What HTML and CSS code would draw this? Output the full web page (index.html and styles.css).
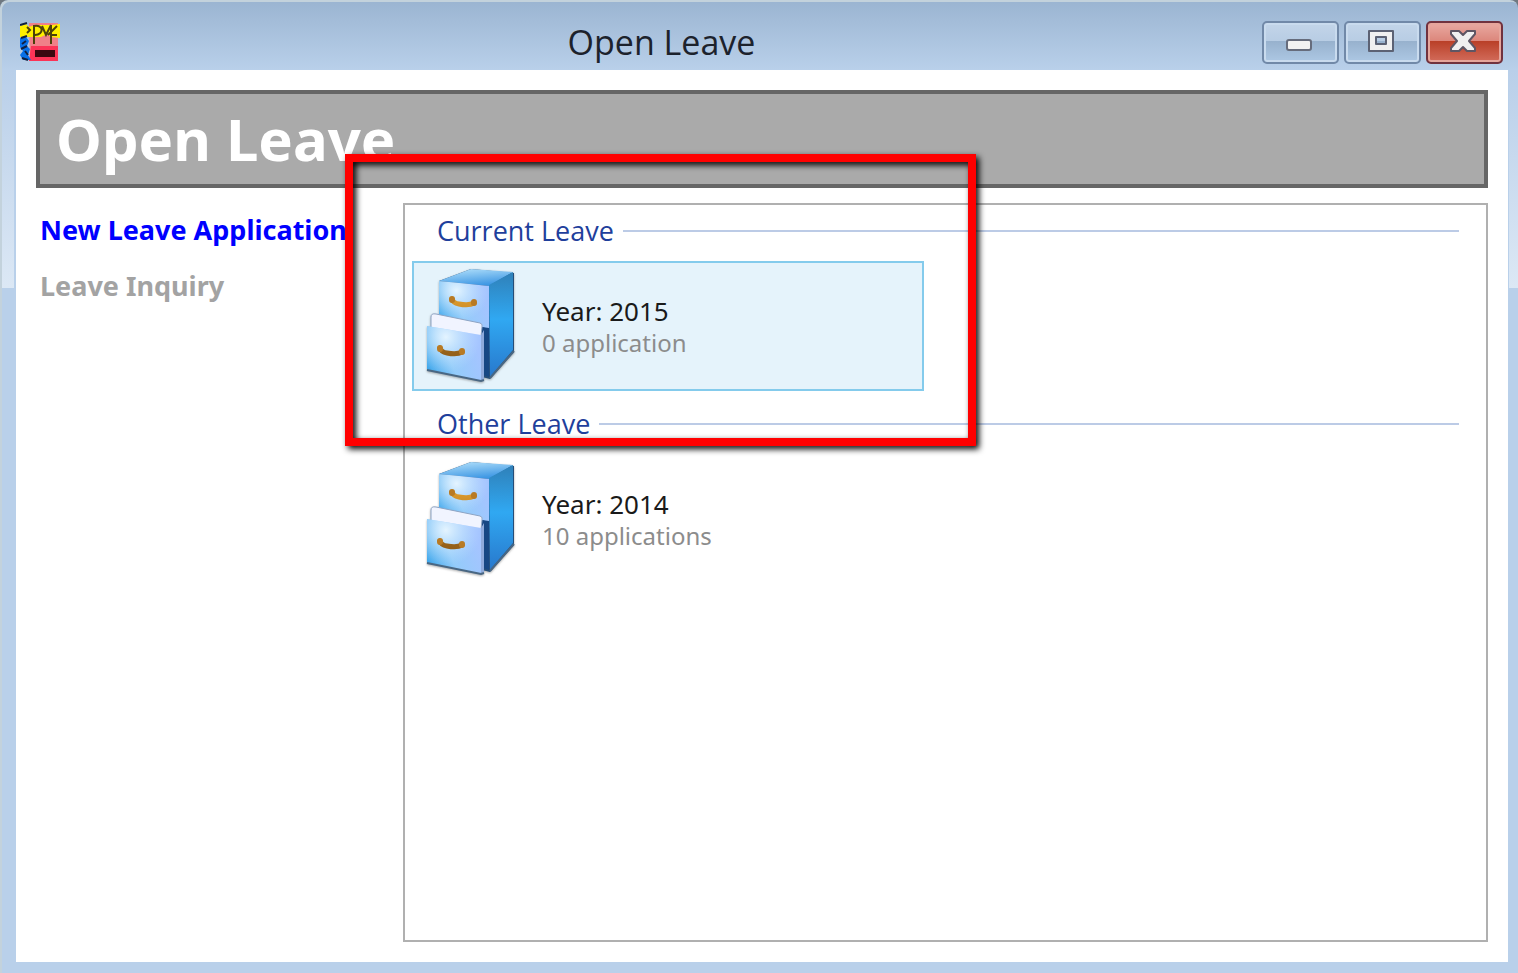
FILE: index.html
```html
<!DOCTYPE html>
<html lang="en">
<head>
<meta charset="utf-8">
<title>Open Leave</title>
<link rel="stylesheet" href="styles.css">
</head>
<body>
<div class="window">
  <header class="titlebar">
    <svg class="app-icon" viewBox="0 0 40 40" aria-hidden="true">
      <path d="M9 1h29v38H10z" fill="#f08088"/>
      <path d="M11 24h27v15H9z" fill="#fb3457"/>
      <path d="M15 28h20v7H15z" fill="#3a0810"/>
      <path d="M0 4l6-2 3 3 6-2h17l8-1v14l-9-1-4-3-6 3H0z" fill="#fff000"/>
      <path d="M0 16l6-1 3 4-2 5 3 3-2 6 3 5H3l-3-5 3-4-3-4z" fill="#0870e8"/>
      <path d="M0 3l7-2M1 16l6-2M1 27l6-3M2 36l6 2M6 19l-4 3M5 29l3 4" stroke="#102040" stroke-width="2" fill="none"/>
      <path d="M14 3v19M14 4c10-2 10 9 1 9M7 5l3 3-3 3M22 4l4 9 5-10M31 3v19M28 13l9-9M30 13h7" stroke="#4c420a" stroke-width="2" fill="none"/>
    </svg>
    <div class="window-title">Open Leave</div>
    <div class="controls">
      <button class="control" type="button" aria-label="Minimize">
        <svg viewBox="0 0 28 24"><rect x="2" y="11" width="24" height="10" rx="2" fill="#f2f2f2" stroke="#666c7c" stroke-width="2"/></svg>
      </button>
      <button class="control" type="button" aria-label="Maximize">
        <svg viewBox="0 0 28 24"><path d="M2 2h24v20H2zM9 8v7h10V8z" fill="#f0f0f0" fill-rule="evenodd" stroke="#5c6274" stroke-width="2" stroke-linejoin="round"/></svg>
      </button>
      <button class="control close" type="button" aria-label="Close">
        <svg viewBox="0 0 28 24"><path d="M2 2h8l4 4 4-4h8v3l-6 7 6 7v3h-8l-4-4-4 4H2v-3l6-7-6-7z" fill="#f0f0f0" stroke="#5e5664" stroke-width="2" stroke-linejoin="round"/></svg>
      </button>
    </div>
  </header>
  <main class="client">
    <h1 class="banner">Open Leave</h1>
    <div class="columns">
      <nav class="tasks">
        <a class="task" href="#new">New Leave Application</a>
        <a class="task disabled" aria-disabled="true">Leave Inquiry</a>
      </nav>
      <section class="list">
        <h2 class="group">Current Leave</h2>
        <button class="item selected" type="button">
          <svg class="cabinet" viewBox="0 0 94 118" aria-hidden="true">
            <defs>
              <linearGradient id="front" x1="0" y1="1" x2="1" y2="0.6">
                <stop offset="0" stop-color="#2c9fe8"/><stop offset=".5" stop-color="#94ccfa"/><stop offset="1" stop-color="#a4c4ff"/>
              </linearGradient>
              <radialGradient id="shine" cx=".35" cy=".2" r=".65">
                <stop offset="0" stop-color="#e4f4ff"/><stop offset="1" stop-color="#bfe2ff" stop-opacity="0"/>
              </radialGradient>
              <linearGradient id="side" x1="0" y1="0" x2="0" y2="1">
                <stop offset="0" stop-color="#2f80b8"/><stop offset=".45" stop-color="#30a8f2"/><stop offset="1" stop-color="#2878cc"/>
              </linearGradient>
              <linearGradient id="top" x1="0" y1="0" x2=".4" y2="1">
                <stop offset="0" stop-color="#b8e4fc"/><stop offset="1" stop-color="#3f98e4"/>
              </linearGradient>
              <linearGradient id="brass" x1="0" y1="0" x2="0" y2="1">
                <stop offset="0" stop-color="#dc9a2c"/><stop offset="1" stop-color="#94601a"/>
              </linearGradient>
            </defs>
            <g id="drawers">
              <path d="M15 14L47 2l43 4v79L66 112l-12-3z" fill="#254d78"/>
              <path d="M15 14L47 2l42 3-24 14z" fill="url(#top)"/>
              <path d="M65 18L89 5v78L66 110z" fill="url(#side)"/>
              <path d="M15 14l50 5v43l-50-13z" fill="url(#front)"/>
              <path d="M15 14l50 5v43l-50-13z" fill="url(#shine)"/>
              <path d="M58 60l7 1v49l-8-3z" fill="#174783"/>
              <path d="M7 50q0-4 5-3l44 9q3 1 2 4l-1 10L7 62z" fill="#f1f4ff" stroke="#8ea4c4"/>
              <path d="M3 59l54 9v46L3 103z" fill="url(#front)"/>
              <path d="M3 59l54 9v46L3 103z" fill="url(#shine)"/>
              <path d="M57 68l3-5v50l-3 1z" fill="#8faadb"/>
              <path d="M3 103l54 11 3-1M66 111l24-27" fill="none" stroke="#496783" stroke-width="2"/>
              <path d="M28 32q1 4 7 5 10 2 15-1M16 81q1 4 7 5 10 2 15-1" fill="none" stroke="url(#brass)" stroke-width="5" stroke-linecap="round"/>
              <path d="M28 32v1M50 35v1M16 81v1M38 84v1" stroke="#b87a24" stroke-width="6" stroke-linecap="round"/>
            </g>
          </svg>
          <span class="text"><span class="name">Year: 2015</span><span class="count">0 application</span></span>
        </button>
        <h2 class="group">Other Leave</h2>
        <button class="item" type="button">
          <svg class="cabinet" viewBox="0 0 94 118" aria-hidden="true"><use href="#drawers"/></svg>
          <span class="text"><span class="name">Year: 2014</span><span class="count">10 applications</span></span>
        </button>
      </section>
    </div>
  </main>
  <div class="highlight"></div>
</div>
</body>
</html>
```
FILE: styles.css
```css
* { box-sizing: border-box; }

body {
  margin: 0;
  background: #6f7880;
  font-family: "Noto Sans", "Open Sans", sans-serif;
}

button {
  font: inherit;
  margin: 0;
}

.window {
  position: relative;
  display: flex;
  flex-direction: column;
  min-height: 100vh;
  padding: 0 10px 11px 16px;
  border-radius: 8px 8px 0 0;
  background:
    linear-gradient(#b9cfe9, #dce8f5) 0 70px / 14px 218px no-repeat,
    linear-gradient(#b9cfe9, #dce8f5) 100% 70px / 9px 218px no-repeat,
    linear-gradient(#9ab4d1, #b9d0ea 70px);
  box-shadow: inset 2px 2px 0 #c3d2dc;
}

.titlebar {
  display: grid;
  grid-template-columns: 1fr auto 1fr;
  align-items: center;
  height: 70px;
  padding: 14px 5px 0 4px;
}

.app-icon {
  width: 40px;
  height: 40px;
}

.window-title {
  padding-right: 200px;
  font-size: 34px;
  line-height: 48px;
  color: #1c222c;
  font-family: "Open Sans", sans-serif;
}

.controls {
  display: flex;
  justify-content: flex-end;
  gap: 5px;
}

.control {
  display: flex;
  align-items: center;
  justify-content: center;
  width: 77px;
  height: 43px;
  padding: 0 3px 3px 0;
  border: 2px solid #7189a8;
  border-radius: 5px;
  background: linear-gradient(#c3d5e9, #b8cde4 45%, #97b1cd 46%, #adc8e4);
  box-shadow: inset 0 0 0 2px #c9dbee;
}

.control svg {
  width: 28px;
  height: 24px;
}

.control.close {
  border-color: #71323e;
  background: linear-gradient(#e9aaa2, #dc877c 45%, #b93f27 46%, #d36d5c);
  box-shadow: inset 0 0 0 2px #e6a69c;
}

.client {
  flex: 1;
  display: flex;
  flex-direction: column;
  gap: 15px;
  padding: 20px;
  background: #fff;
}

.banner {
  margin: 0;
  padding: 9px 16px 9px;
  border: 4px solid #666;
  background: #aaa;
  color: #fff;
  font-size: 58px;
  line-height: 72px;
  font-weight: 700;
}

.columns {
  flex: 1;
  display: grid;
  grid-template-columns: 367px 1fr;
}

.tasks {
  display: flex;
  flex-direction: column;
  gap: 20px;
  padding: 9px 4px;
}

.task {
  color: #00f;
  font-size: 27px;
  line-height: 36px;
  font-weight: 700;
  text-decoration: none;
  white-space: nowrap;
}

.task.disabled { color: #a3a3a3; }

.list {
  padding: 8px 27px 8px 7px;
  border: 2px solid #b0b0b0;
}

.group {
  display: flex;
  align-items: center;
  gap: 9px;
  margin: 0 0 12px;
  padding-left: 25px;
  color: #1f3f9c;
  font-family: "Open Sans", sans-serif;
  font-size: 27px;
  line-height: 36px;
  font-weight: 400;
}

.group::after {
  content: "";
  flex: 1;
  height: 2px;
  background: #bccbe6;
}

.item {
  display: flex;
  align-items: center;
  gap: 24px;
  width: 512px;
  height: 130px;
  margin-bottom: 15px;
  padding: 0 10px;
  border: 2px solid transparent;
  background: none;
  text-align: left;
}

.item.selected {
  border-color: #84cbec;
  background: #e5f3fb;
}

.cabinet {
  width: 94px;
  height: 118px;
  filter: drop-shadow(0 1px 1px #6668);
}

.text {
  display: flex;
  flex-direction: column;
  padding-top: 2px;
  line-height: 32px;
}

.name {
  color: #1a1a1a;
  font-size: 26px;
}

.count {
  color: #8c8c8c;
  font-size: 24px;
}

.highlight {
  position: absolute;
  left: 345px;
  top: 154px;
  width: 631px;
  height: 292px;
  border: 8px solid #f00;
  filter: drop-shadow(3px 3px 3px #000);
  pointer-events: none;
}
```
